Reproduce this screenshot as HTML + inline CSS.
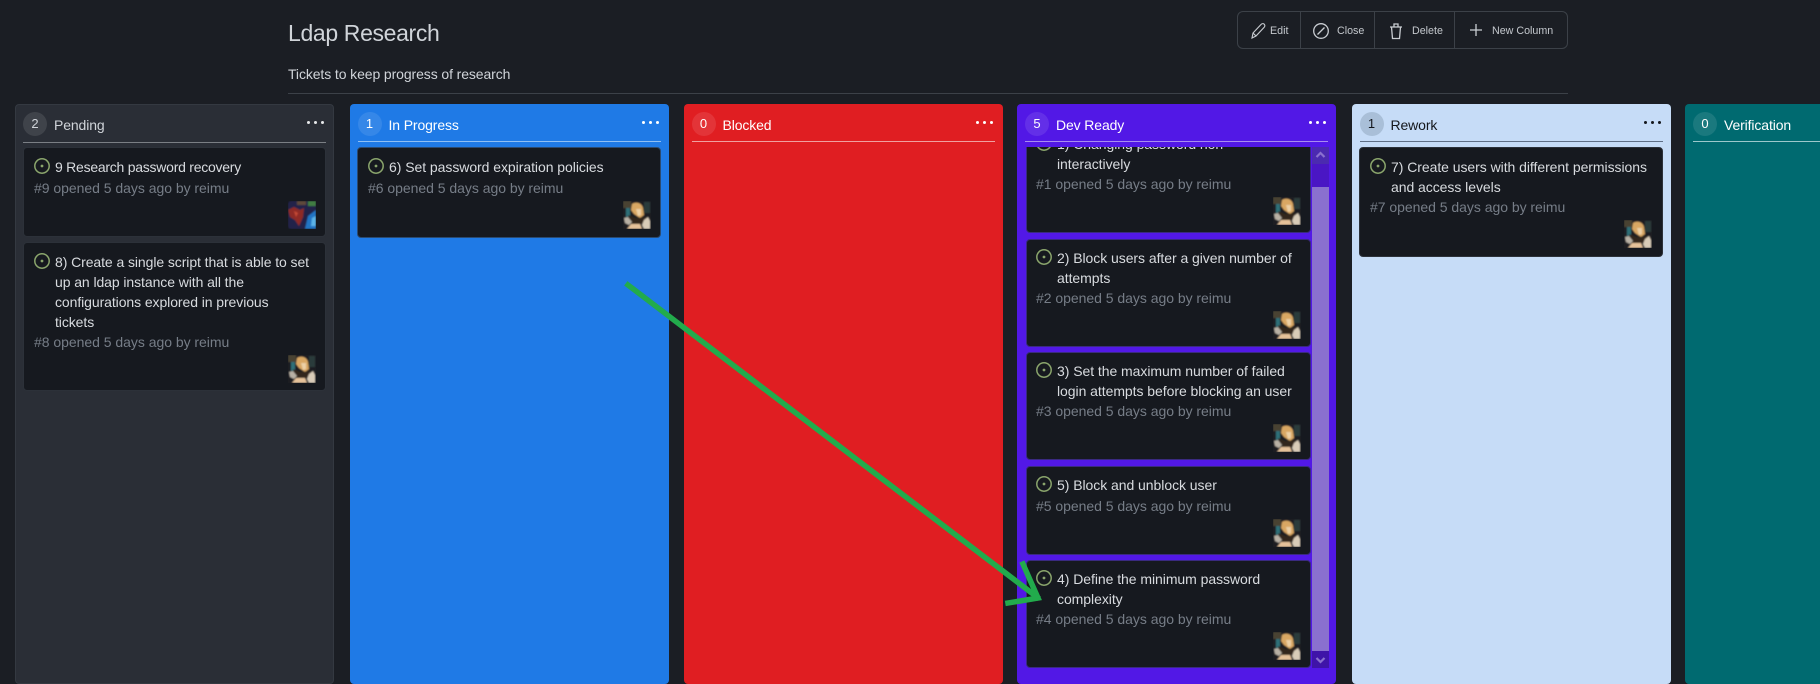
<!DOCTYPE html>
<html><head><meta charset="utf-8"><title>Ldap Research</title>
<style>
html,body{margin:0;padding:0;background:#1b1e24;}
body{width:1820px;height:676px;overflow:hidden;position:relative;font-family:"Liberation Sans",sans-serif;color:#d5d8dc;}
.a{position:absolute;white-space:nowrap;}
.col{position:absolute;top:104px;width:319px;height:580px;border-radius:4px;}
.rule{position:absolute;left:8px;right:8px;top:37px;height:1px;}
.badge{position:absolute;left:8px;top:8px;width:24px;height:24px;border-radius:50%;text-align:center;line-height:24px;font-size:13px;background:rgba(255,255,255,.1);}
.name{position:absolute;left:39px;top:9px;line-height:24px;font-size:14px;white-space:nowrap;letter-spacing:-.12px;}
.dots{position:absolute;left:292px;top:17px;width:18px;height:3px;}
.dots i{position:absolute;top:0;width:3px;height:3px;border-radius:50%;background:currentColor;}
.card{position:absolute;background:#16191f;border:1px solid #2c3139;border-radius:4px;box-sizing:border-box;overflow:hidden;}
.t{position:absolute;font-size:14px;line-height:20px;color:#d8dbdf;white-space:nowrap;letter-spacing:-.05px;}
.m{position:absolute;font-size:14px;line-height:20px;color:#767d87;white-space:nowrap;letter-spacing:-.03px;}
.ic{position:absolute;width:16px;height:16px;}
.av{position:absolute;width:28px;height:28px;}
.btn{font-size:10.7px;line-height:16px;color:#c4c8cd;}
</style></head><body>
<svg width="0" height="0" style="position:absolute">
<defs>
<filter id="bl" x="0" y="0" width="1" height="1"><feGaussianBlur stdDeviation="0.7"/></filter>
<symbol id="op" viewBox="0 0 16 16"><circle cx="8" cy="8" r="7.200" fill="none" stroke="#8aa56c" stroke-width="1.500"/><circle cx="8" cy="8" r="1.400" fill="#8aa56c"/></symbol>
<symbol id="re" viewBox="0 0 28 28"><g filter="url(#bl)"><rect width="28" height="28" fill="#1e1f20"/><rect x="0" y="0" width="8" height="7" fill="#4a4232"/><rect x="21" y="1" width="6" height="11" fill="#2c3a3a"/><rect x="3" y="7" width="4" height="9" fill="#2f6f78"/><path d="M9 3C13 0 19 2 20 7L21 14 17 17 11 13 8 9Z" fill="#d9a764"/><path d="M13 8L18 8 18 14 15 15Z" fill="#ecd0a6"/><path d="M5 14L12 17 23 16 22 22 12 24 6 20Z" fill="#33271f"/><path d="M1 17L5 16 9 21 6 24 2 22Z" fill="#b8b0a4"/><path d="M4 28L8 23 17 23 19 28Z" fill="#e6c29a"/><path d="M21 19L25 16 27 20 27 28 21 28 19 24Z" fill="#d9ccb8"/></g></symbol>
<symbol id="dk" viewBox="0 0 28 28"><g filter="url(#bl)"><rect width="28" height="28" rx="3" fill="#20244a"/><rect x="20" y="0" width="8" height="5" fill="#3f7d42"/><rect x="9" y="0" width="9" height="4" fill="#5f4a3a"/><path d="M0 9L6 6 12 9 16 7 15 16 11 25 7 19 2 16Z" fill="#8f2c28"/><path d="M6 10L10 12 8 16Z" fill="#c84a34"/><path d="M17 28L20 15 28 9 28 28Z" fill="#2474c4"/><path d="M23 25L24 17 28 15 28 25Z" fill="#5cb4e8"/></g></symbol>
</defs></svg>

<div class="a" style="left:288px;top:17px;font-size:23px;line-height:32px;color:#d0d4d9;letter-spacing:-.35px;">Ldap Research</div>
<div class="a" style="left:288px;top:64px;font-size:14px;line-height:20px;color:#d0d4d9;letter-spacing:-.1px;">Tickets to keep progress of research</div>
<div class="a" style="left:288px;top:93px;width:1280px;height:1px;background:#3c4148;"></div>

<div class="a" style="left:1237px;top:11px;width:331px;height:38px;border:1px solid #3c4148;border-radius:6px;box-sizing:border-box;"></div>
<div class="a" style="left:1300px;top:11px;width:1px;height:38px;background:#3c4148;"></div>
<div class="a" style="left:1374px;top:11px;width:1px;height:38px;background:#3c4148;"></div>
<div class="a" style="left:1454px;top:11px;width:1px;height:38px;background:#3c4148;"></div>
<svg class="a" style="left:1250px;top:22px" width="16" height="18" viewBox="0 0 16 18" fill="none" stroke="#c9cdd2" stroke-width="1.100"><path d="M2 16L3 11 11 2.500C12 1.500 13.500 1.500 14.300 2.300 15 3.200 15 4.300 14.200 5.200L6 14Z"/><path d="M3 11L6 14"/></svg>
<svg class="a" style="left:1312px;top:22px" width="18" height="18" viewBox="0 0 18 18" fill="none" stroke="#c9cdd2" stroke-width="1.300"><circle cx="9" cy="9" r="7.300"/><path d="M12.500 5.500L5.500 12.500"/></svg>
<svg class="a" style="left:1389px;top:22px" width="14" height="18" viewBox="0 0 14 18" fill="none" stroke="#c9cdd2" stroke-width="1.300"><path d="M1 5H13M5 5V2H9V5M2.500 5L3.500 16.500H10.500L11.500 5"/></svg>
<svg class="a" style="left:1469px;top:23px" width="14" height="14" viewBox="0 0 14 14" fill="none" stroke="#c9cdd2" stroke-width="1.300"><path d="M7 1V13M1 7H13"/></svg>
<div class="a btn" style="left:1270px;top:23px;">Edit</div>
<div class="a btn" style="left:1337px;top:23px;">Close</div>
<div class="a btn" style="left:1412px;top:23px;">Delete</div>
<div class="a btn" style="left:1492px;top:23px;">New Column</div>

<!-- Pending -->
<div class="col" style="left:15px;background:#2a2e36;border:1px solid #343941;box-sizing:border-box;color:#d0d4d9;">
<div class="rule" style="background:#7b7f85;left:7px;right:7px;top:36.500px;"></div>
<div class="badge" style="left:7px;top:7px;">2</div><div class="name" style="left:38px;top:8px;">Pending</div>
<div class="dots" style="left:291px;top:16px;color:#e6e8ea"><i style="left:0"></i><i style="left:7px"></i><i style="left:14px"></i></div></div>
<div class="card" style="left:23px;top:147px;width:303px;height:90px;">
<svg class="ic" style="left:10px;top:10px"><use href="#op"/></svg><div class="t" style="left:31px;top:9px;letter-spacing:-.25px">9 Research password recovery</div>
<div class="m" style="left:10px;top:30px">#9 opened 5 days ago by reimu</div>
<svg class="av" style="left:264px;top:53px"><use href="#dk"/></svg></div>
<div class="card" style="left:23px;top:242px;width:303px;height:149px;">
<svg class="ic" style="left:10px;top:10px"><use href="#op"/></svg><div class="t" style="left:31px;top:9px;letter-spacing:-.08px">8) Create a single script that is able to set<br>up an ldap instance with all the<br>configurations explored in previous<br>tickets</div>
<div class="m" style="left:10px;top:89px">#8 opened 5 days ago by reimu</div>
<svg class="av" style="left:264px;top:112px"><use href="#re"/></svg></div>

<!-- In Progress -->
<div class="col" style="left:349.500px;background:#1f7ae6;color:#fff;">
<div class="rule" style="background:#8fc0f5;"></div>
<div class="badge">1</div><div class="name">In Progress</div>
<div class="dots"><i style="left:0"></i><i style="left:7px"></i><i style="left:14px"></i></div></div>
<div class="card" style="left:357px;top:147px;width:304px;height:91px;border-color:#2b4a70;">
<svg class="ic" style="left:10px;top:10px"><use href="#op"/></svg><div class="t" style="left:31px;top:9px">6) Set password expiration policies</div>
<div class="m" style="left:10px;top:30px">#6 opened 5 days ago by reimu</div>
<svg class="av" style="left:265px;top:53px"><use href="#re"/></svg></div>

<!-- Blocked -->
<div class="col" style="left:683.500px;background:#e01e22;color:#fff;">
<div class="rule" style="background:#f0a0a0;"></div>
<div class="badge">0</div><div class="name">Blocked</div>
<div class="dots"><i style="left:0"></i><i style="left:7px"></i><i style="left:14px"></i></div></div>

<!-- Dev Ready -->
<div class="col" style="left:1017px;background:#5218e6;color:#fff;">
<div class="rule" style="background:#a88cf0;"></div>
<div class="badge">5</div><div class="name">Dev Ready</div>
<div class="dots"><i style="left:0"></i><i style="left:7px"></i><i style="left:14px"></i></div></div>
<div class="a" style="left:1026px;top:147px;width:285px;height:521px;overflow:hidden;">
<div class="card" style="left:0;top:-22px;width:285px;height:108px;border-color:#3a2a80;">
<svg class="ic" style="left:9px;top:9px"><use href="#op"/></svg><div class="t" style="left:30px;top:8px">1) Changing password non<br>interactively</div>
<div class="m" style="left:9px;top:48px">#1 opened 5 days ago by reimu</div>
<svg class="av" style="left:246px;top:71px"><use href="#re"/></svg></div>
<div class="card" style="left:0;top:92px;width:285px;height:108px;border-color:#3a2a80;">
<svg class="ic" style="left:9px;top:9px"><use href="#op"/></svg><div class="t" style="left:30px;top:8px">2) Block users after a given number of<br>attempts</div>
<div class="m" style="left:9px;top:48px">#2 opened 5 days ago by reimu</div>
<svg class="av" style="left:246px;top:71px"><use href="#re"/></svg></div>
<div class="card" style="left:0;top:205px;width:285px;height:108px;border-color:#3a2a80;">
<svg class="ic" style="left:9px;top:9px"><use href="#op"/></svg><div class="t" style="left:30px;top:8px">3) Set the maximum number of failed<br>login attempts before blocking an user</div>
<div class="m" style="left:9px;top:48px">#3 opened 5 days ago by reimu</div>
<svg class="av" style="left:246px;top:71px"><use href="#re"/></svg></div>
<div class="card" style="left:0;top:319px;width:285px;height:89px;border-color:#3a2a80;">
<svg class="ic" style="left:9px;top:9px"><use href="#op"/></svg><div class="t" style="left:30px;top:8px">5) Block and unblock user</div>
<div class="m" style="left:9px;top:29px">#5 opened 5 days ago by reimu</div>
<svg class="av" style="left:246px;top:52px"><use href="#re"/></svg></div>
<div class="card" style="left:0;top:413px;width:285px;height:108px;border-color:#3a2a80;">
<svg class="ic" style="left:9px;top:9px"><use href="#op"/></svg><div class="t" style="left:30px;top:8px">4) Define the minimum password<br>complexity</div>
<div class="m" style="left:9px;top:48px">#4 opened 5 days ago by reimu</div>
<svg class="av" style="left:246px;top:71px"><use href="#re"/></svg></div>
</div>
<!-- scrollbar -->
<div class="a" style="left:1312px;top:147px;width:17px;height:521px;background:#4a16c4;"></div>
<div class="a" style="left:1312px;top:147px;width:17px;height:17px;background:#4b2ab0;"></div>
<div class="a" style="left:1312px;top:187px;width:17px;height:464px;background:#8a70cf;"></div>
<div class="a" style="left:1312px;top:651px;width:17px;height:17px;background:#3f14a8;"></div>
<svg class="a" style="left:1312px;top:147px" width="17" height="17" fill="none" stroke="#8a70cf" stroke-width="2.200"><path d="M4.500 10L8.500 6 12.500 10"/></svg>
<svg class="a" style="left:1312px;top:651px" width="17" height="17" fill="none" stroke="#8a70cf" stroke-width="2.200"><path d="M4.500 7L8.500 11 12.500 7"/></svg>

<!-- Rework -->
<div class="col" style="left:1351.500px;background:#c6dcf7;color:#14171c;">
<div class="rule" style="background:#5f6f86;"></div>
<div class="badge" style="background:#a9bfd8;">1</div><div class="name">Rework</div>
<div class="dots"><i style="left:0"></i><i style="left:7px"></i><i style="left:14px"></i></div></div>
<div class="card" style="left:1359px;top:147px;width:304px;height:110px;">
<svg class="ic" style="left:10px;top:10px"><use href="#op"/></svg><div class="t" style="left:31px;top:9px">7) Create users with different permissions<br>and access levels</div>
<div class="m" style="left:10px;top:49px">#7 opened 5 days ago by reimu</div>
<svg class="av" style="left:264px;top:72px"><use href="#re"/></svg></div>

<!-- Verification -->
<div class="col" style="left:1685px;background:#006a70;color:#fff;">
<div class="rule" style="background:#9cc8cb;right:-10px;"></div>
<div class="badge">0</div><div class="name">Verification</div></div>

<!-- Arrow -->
<svg class="a" style="left:0;top:0" width="1820" height="676" fill="none" stroke="#22ab4c" stroke-width="5.500" stroke-linecap="square" stroke-linejoin="miter"><path d="M628 285L1037 597"/><path d="M1023 564L1038 598 1008 603"/></svg>
</body></html>
